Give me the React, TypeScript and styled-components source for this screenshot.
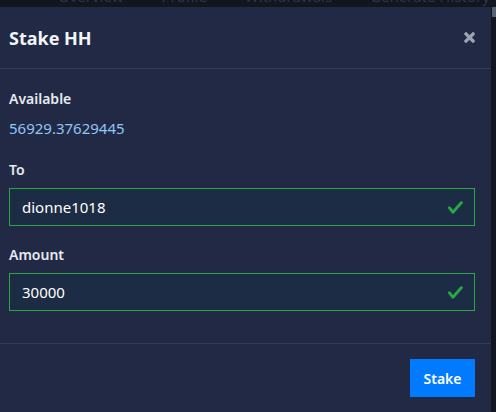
import React from "react";
import styled, { createGlobalStyle } from "styled-components";

const Global = createGlobalStyle`
  html, body { margin: 0; padding: 0; }
  body {
    background: #12161f;
    font-family: "Noto Sans", "DejaVu Sans", sans-serif;
    overflow: hidden;
  }
`;

const Page = styled.div`
  position: relative;
  width: 496px;
  height: 412px;
  overflow: hidden;
  background: #12161f;
`;

const BackNav = styled.div`
  position: absolute;
  top: -14px;
  left: 58px;
  display: flex;
  gap: 38px;
  font-size: 15px;
  line-height: 20px;
  color: #2b3448;
  white-space: nowrap;
`;

const Scroll = styled.div`
  position: absolute;
  top: 7px;
  right: 0;
  width: 4px;
  height: 10px;
  background: #5a6272;
`;

const Modal = styled.div`
  position: absolute;
  top: 7px;
  left: -7px;
  width: 498px;
  height: 420px;
  background: #212945;
  display: flex;
  flex-direction: column;
`;

const Header = styled.div`
  height: 62px;
  box-sizing: border-box;
  padding: 0 16px;
  display: flex;
  align-items: center;
  justify-content: space-between;
  border-bottom: 1px solid #333d57;
`;

const Title = styled.h5`
  margin: 0;
  font-size: 18px;
  font-weight: 700;
  color: #f2f4f8;
`;

const Close = styled.button`
  border: 0;
  background: none;
  padding: 0;
  width: 12px;
  height: 12px;
  display: flex;
  align-items: center;
  justify-content: center;
`;

const Body = styled.div`
  padding: 19px 16px 16px;
  display: flex;
  flex-direction: column;
  border-bottom: 1px solid #333d57;
`;

const Label = styled.div`
  font-size: 14px;
  font-weight: 600;
  color: #e6e9ef;
  line-height: 21px;
  margin-bottom: 8px;
`;

const Value = styled.div`
  font-size: 15px;
  color: #8fc6f5;
  line-height: 21px;
  margin-top: 1px;
  margin-bottom: 20px;
`;

const Field = styled.div<{ $last?: boolean }>`
  height: 38px;
  box-sizing: border-box;
  border: 1px solid #28a745;
  background: #1c2c45;
  display: flex;
  align-items: center;
  padding: 0 10px 0 12px;
  margin-bottom: ${(p) => (p.$last ? "16px" : "18px")};
`;

const Input = styled.input`
  flex: 1;
  border: 0;
  outline: none;
  background: transparent;
  color: #ffffff;
  font-family: inherit;
  font-size: 15px;
  padding: 0;
`;

const Check = styled.svg`
  width: 17px;
  height: 17px;
`;

const Footer = styled.div`
  display: flex;
  justify-content: flex-end;
  padding: 15px 16px 16px;
`;

const Button = styled.button`
  background: #007bff;
  color: #fff;
  border: 0;
  border-radius: 0;
  width: 65px;
  height: 38px;
  font-family: inherit;
  font-size: 14px;
  font-weight: 600;
`;

const CheckIcon = () => (
  <Check viewBox="0 0 8 8">
    <path
      fill="#28a745"
      d="M2.3 6.73L.6 4.53c-.4-1.04.46-1.4 1.1-.8l1.1 1.4 3.4-3.8c.6-.63 1.6-.27 1.2.7l-4 4.6c-.43.5-.8.4-1.1.1z"
    />
  </Check>
);

export default function App() {
  return (
    <Page>
      <Global />
      <BackNav>
        <span>Overview</span>
        <span>Profile</span>
        <span>Withdrawals</span>
        <span>Generate History</span>
      </BackNav>
      <Scroll />
      <Modal>
        <Header>
          <Title>Stake HH</Title>
          <Close aria-label="close">
            <svg width="11" height="11" viewBox="0 0 10 10">
              <path d="M1.8 1.8L8.2 8.2M8.2 1.8L1.8 8.2" stroke="#9ca3b0" strokeWidth="3" strokeLinecap="square" />
            </svg>
          </Close>
        </Header>
        <Body>
          <Label>Available</Label>
          <Value>56929.37629445</Value>
          <Label>To</Label>
          <Field>
            <Input defaultValue="dionne1018" />
            <CheckIcon />
          </Field>
          <Label>Amount</Label>
          <Field $last>
            <Input defaultValue="30000" />
            <CheckIcon />
          </Field>
        </Body>
        <Footer>
          <Button>Stake</Button>
        </Footer>
      </Modal>
    </Page>
  );
}
